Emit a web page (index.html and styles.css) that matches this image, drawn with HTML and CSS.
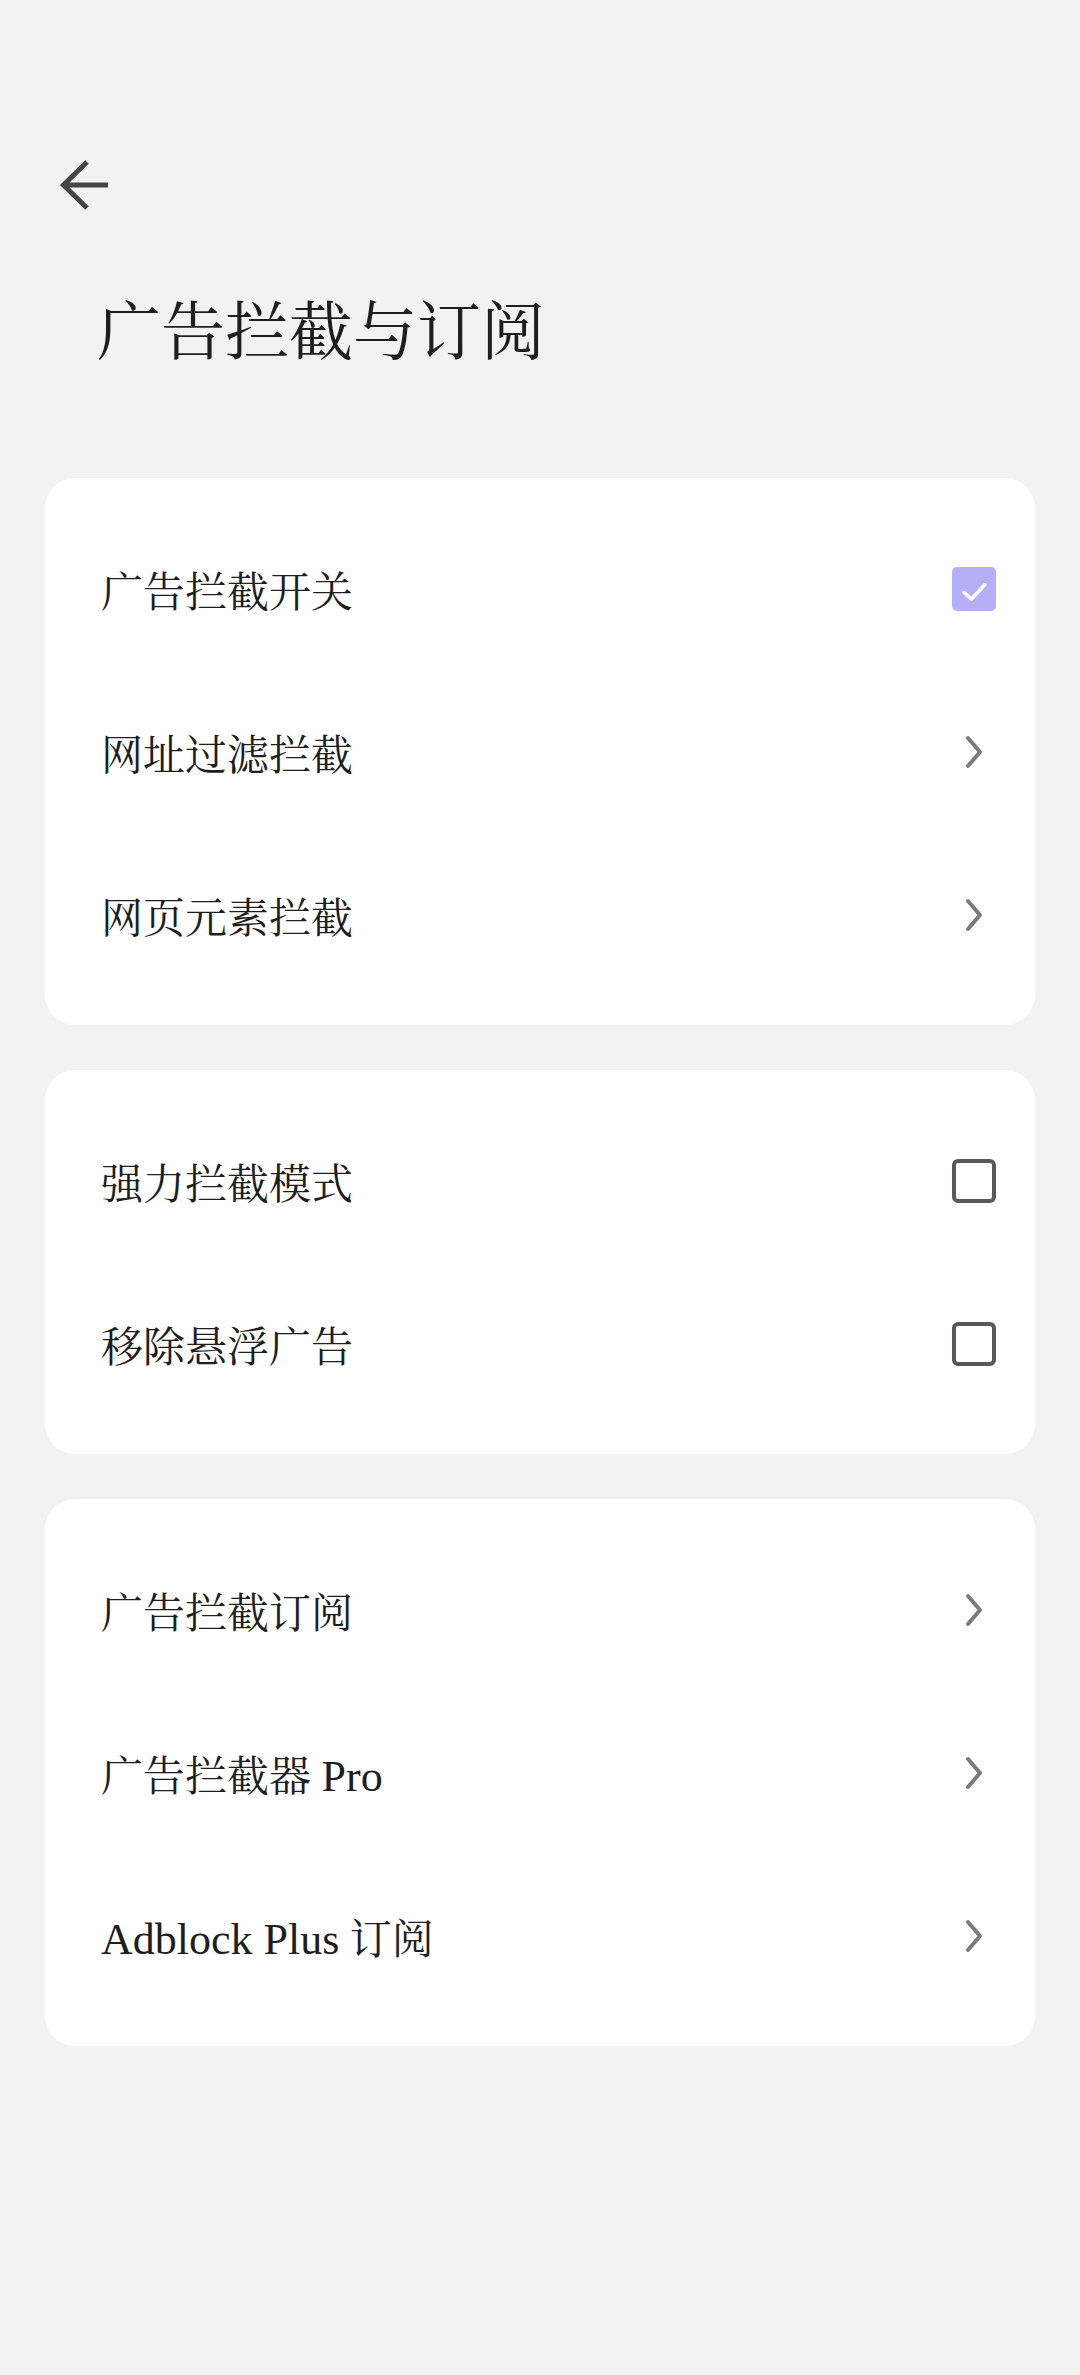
FILE: index.html
```html
<!DOCTYPE html>
<html lang="zh-CN">
<head>
<meta charset="utf-8">
<title>广告拦截与订阅</title>
<link rel="stylesheet" href="styles.css">
</head>
<body>
<div class="header">
  <svg class="back" width="50" height="50" viewBox="0 0 50 50" aria-label="返回">
    <path d="M28 2 L4.5 25 L28 48 M4.5 25 H49" fill="none" stroke="#444444" stroke-width="5" stroke-linejoin="miter"/>
  </svg>
</div>
<h1 class="title">广告拦截与订阅</h1>
<div class="cards">
  <div class="card">
    <div class="row">
      <span class="label">广告拦截开关</span>
      <svg class="icon" width="44" height="44" viewBox="0 0 44 44">
        <rect x="0" y="0" width="44" height="44" rx="5" fill="#b8aef6"/>
        <path d="M12 25.5 L19.5 32 L33 17.5" fill="none" stroke="#ffffff" stroke-width="3.5" stroke-linecap="round" stroke-linejoin="round"/>
      </svg>
    </div>
    <div class="row">
      <span class="label">网址过滤拦截</span>
      <svg class="icon" width="44" height="44" viewBox="0 0 44 44">
        <path d="M16 8 L28 22 L16 36" fill="none" stroke="#7a7a80" stroke-width="4" stroke-linecap="round" stroke-linejoin="round"/>
      </svg>
    </div>
    <div class="row">
      <span class="label">网页元素拦截</span>
      <svg class="icon" width="44" height="44" viewBox="0 0 44 44">
        <path d="M16 8 L28 22 L16 36" fill="none" stroke="#7a7a80" stroke-width="4" stroke-linecap="round" stroke-linejoin="round"/>
      </svg>
    </div>
  </div>
  <div class="card">
    <div class="row">
      <span class="label">强力拦截模式</span>
      <svg class="icon" width="44" height="44" viewBox="0 0 44 44">
        <rect x="2" y="2" width="40" height="40" rx="4" fill="none" stroke="#58585e" stroke-width="4"/>
      </svg>
    </div>
    <div class="row">
      <span class="label">移除悬浮广告</span>
      <svg class="icon" width="44" height="44" viewBox="0 0 44 44">
        <rect x="2" y="2" width="40" height="40" rx="4" fill="none" stroke="#58585e" stroke-width="4"/>
      </svg>
    </div>
  </div>
  <div class="card">
    <div class="row">
      <span class="label">广告拦截订阅</span>
      <svg class="icon" width="44" height="44" viewBox="0 0 44 44">
        <path d="M16 8 L28 22 L16 36" fill="none" stroke="#7a7a80" stroke-width="4" stroke-linecap="round" stroke-linejoin="round"/>
      </svg>
    </div>
    <div class="row">
      <span class="label">广告拦截器 <span class="latin">Pro</span></span>
      <svg class="icon" width="44" height="44" viewBox="0 0 44 44">
        <path d="M16 8 L28 22 L16 36" fill="none" stroke="#7a7a80" stroke-width="4" stroke-linecap="round" stroke-linejoin="round"/>
      </svg>
    </div>
    <div class="row">
      <span class="label"><span class="latin">Adblock Plus</span> 订阅</span>
      <svg class="icon" width="44" height="44" viewBox="0 0 44 44">
        <path d="M16 8 L28 22 L16 36" fill="none" stroke="#7a7a80" stroke-width="4" stroke-linecap="round" stroke-linejoin="round"/>
      </svg>
    </div>
  </div>
</div>
</body>
</html>
```
FILE: styles.css
```css
html, body {
  margin: 0;
  padding: 0;
}
body {
  background: #f2f2f2;
  color: #1e1e1e;
  font-family: "Liberation Serif", "Noto Serif CJK SC", "Noto Sans CJK SC", serif;
  min-height: 2375px;
}
.header {
  padding: 160px 0 0 59px;
}
.back {
  display: block;
}
.title {
  margin: 91px 0 0 97px;
  font-size: 64px;
  line-height: 64px;
  font-weight: 400;
  color: #1e1e1e;
}
.cards {
  margin-top: 113px;
  padding: 0 45px;
  display: flex;
  flex-direction: column;
  gap: 45px;
}
.card {
  background: #ffffff;
  border-radius: 30px;
  padding: 29px 39px 29px 56px;
}
.row {
  height: 163px;
  display: flex;
  align-items: center;
  justify-content: space-between;
}
.label {
  font-size: 42px;
  line-height: 50px;
  padding-top: 8px;
  color: #1e1e1e;
}
.latin {
  font-size: 44px;
}
.icon {
  display: block;
  flex: none;
}
```
